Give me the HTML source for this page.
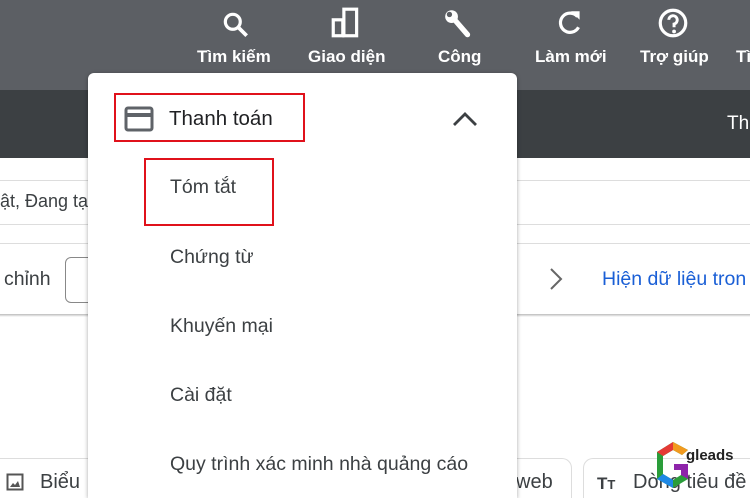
<!DOCTYPE html>
<html><head><meta charset="utf-8"><style>
*{margin:0;padding:0;box-sizing:border-box}
html,body{width:750px;height:498px;overflow:hidden}
body{position:relative;background:#fff;font-family:"Liberation Sans",Arial,sans-serif}
.a{position:absolute}
.top{left:0;top:0;width:750px;height:90px;background:#5c5f64}
.bar2{left:0;top:90px;width:750px;height:68px;background:#3c4043}
.tl{color:#fff;font-size:17px;font-weight:bold;top:47px;white-space:nowrap}
.menu{left:88px;top:73px;width:429px;height:425px;background:#fff;border-radius:6px 6px 0 0;box-shadow:0 1px 4px rgba(0,0,0,.35)}
.mi{color:#3c4043;font-size:19.5px;left:170px;white-space:nowrap}
.red{border:2px solid #e0111b}
</style></head><body>
<div class="a top"></div>
<div class="a bar2"></div>
<svg class="a" style="left:220px;top:9px" width="32" height="32" viewBox="0 0 30 30"><circle cx="12" cy="12" r="7" fill="none" stroke="#fff" stroke-width="3"/><line x1="17" y1="17" x2="25" y2="25" stroke="#fff" stroke-width="3.5"/></svg>
<svg class="a" style="left:329px;top:6px" width="34" height="34" viewBox="0 0 32 32"><rect x="14" y="3" width="12" height="25" fill="none" stroke="#fff" stroke-width="3"/><rect x="4" y="13" width="9" height="15" fill="none" stroke="#fff" stroke-width="3"/></svg>
<svg class="a" style="left:442px;top:7px" width="34" height="34" viewBox="0 0 32 32"><circle cx="9" cy="9" r="6" fill="#fff"/><circle cx="7" cy="7" r="2.5" fill="#5c5f64"/><line x1="11" y1="11" x2="24" y2="26" stroke="#fff" stroke-width="5" stroke-linecap="round"/></svg>
<svg class="a" style="left:554px;top:7px" width="32" height="32" viewBox="0 0 30 30"><path d="M22 9 A9 9 0 1 0 23 19" fill="none" stroke="#fff" stroke-width="3"/><path d="M16 4 L24 4 L24 12 Z" fill="#fff"/></svg>
<svg class="a" style="left:656px;top:6px" width="34" height="34" viewBox="0 0 32 32"><circle cx="16" cy="16" r="12" fill="none" stroke="#fff" stroke-width="3"/><path d="M12 13 a4 4 0 1 1 5 4 v3" fill="none" stroke="#fff" stroke-width="2.8"/><circle cx="17" cy="24" r="1.8" fill="#fff"/></svg>
<div class="a tl" style="left:197px">Tìm kiếm</div>
<div class="a tl" style="left:308px">Giao diện</div>
<div class="a tl" style="left:438px">Công</div>
<div class="a tl" style="left:535px">Làm mới</div>
<div class="a tl" style="left:640px">Trợ giúp</div>
<div class="a tl" style="left:736px">Tì</div>
<div class="a" style="left:727px;top:113px;color:#fff;font-size:19px">Th</div>
<div class="a" style="left:0;top:180px;width:750px;border-top:1px solid #ddd"></div>
<div class="a" style="left:0;top:224px;width:750px;border-top:1px solid #ddd"></div>
<div class="a" style="left:0;top:243px;width:750px;border-top:1px solid #ddd"></div>
<div class="a" style="left:0;top:314px;width:750px;height:3px;background:linear-gradient(#bbb,#fff)"></div>
<div class="a" style="left:0;top:191px;font-size:18px;color:#3c4043;white-space:nowrap">ật, Đang tạ</div>
<div class="a" style="left:4px;top:268px;font-size:19.5px;color:#3c4043">chỉnh</div>
<div class="a" style="left:65px;top:257px;width:40px;height:46px;border:1px solid #888;border-radius:6px"></div>
<svg class="a" style="left:548px;top:267px" width="16" height="24" viewBox="0 0 16 24"><path d="M3 2 L13 12 L3 22" fill="none" stroke="#666" stroke-width="2"/></svg>
<div class="a" style="left:602px;top:268px;font-size:19.5px;color:#1a5fd6;white-space:nowrap">Hiện dữ liệu tron</div>
<div class="a" style="left:-10px;top:458px;width:110px;height:40px;border:1px solid #ddd;border-bottom:none;border-radius:10px 10px 0 0"></div>
<svg class="a" style="left:6px;top:473px" width="18" height="18" viewBox="0 0 18 18"><rect x="1.5" y="1.5" width="15" height="15" fill="none" stroke="#555" stroke-width="2"/><path d="M4 14 L7 10 L9 12 L12 8 L14 14Z" fill="#555"/></svg>
<div class="a" style="left:40px;top:471px;font-size:20px;color:#3c4043">Biểu</div>
<div class="a" style="left:480px;top:458px;width:92px;height:40px;border:1px solid #ddd;border-bottom:none;border-radius:10px 10px 0 0"></div>
<div class="a" style="left:516px;top:471px;font-size:20px;color:#3c4043">web</div>
<div class="a" style="left:583px;top:458px;width:167px;height:40px;border:1px solid #ddd;border-bottom:none;border-right:none;border-radius:10px 0 0 0"></div>
<div class="a" style="left:597px;top:474px;font-size:17px;font-weight:bold;color:#3c4043">T<span style="font-size:13px">T</span></div>
<div class="a" style="left:633px;top:471px;font-size:20px;color:#3c4043;white-space:nowrap;width:117px;overflow:hidden">Dòng tiêu đề</div>
<svg class="a" style="left:655px;top:440px" width="40" height="52" viewBox="0 0 40 52"><path d="M18 2 L33 10 L27 15 L18 10 L8 16 L8 34 L18 40 L26 35 L26 30 L19 30 L19 24 L33 24 L33 39 L18 48 L2 39 L2 12 Z" fill="#2a9d3a"/><path d="M18 2 L33 10 L27 15 L18 10Z" fill="#f29a1f"/><path d="M2 12 L18 2 L18 10 L8 16Z" fill="#e53935"/><path d="M19 24 L33 24 L33 39 L26 35 L26 30 L19 30Z" fill="#8e24aa"/><path d="M2 39 L18 48 L18 40 L8 34Z" fill="#1e88e5"/></svg>
<div class="a" style="left:686px;top:447px;font-size:15px;font-weight:bold;color:#222">gleads</div>
<div class="a menu"></div>
<div class="a red" style="left:114px;top:93px;width:191px;height:49px"></div>
<svg class="a" style="left:124px;top:106px" width="30" height="26" viewBox="0 0 30 26"><rect x="2" y="2" width="26" height="22" rx="2" fill="none" stroke="#5f6368" stroke-width="3"/><rect x="2" y="7" width="26" height="4" fill="#5f6368"/></svg>
<div class="a" style="left:169px;top:107px;font-size:20.5px;color:#202124">Thanh toán</div>
<svg class="a" style="left:451px;top:110px" width="28" height="18" viewBox="0 0 28 18"><path d="M3 15 L14 4 L25 15" fill="none" stroke="#3c4043" stroke-width="2.8"/></svg>
<div class="a red" style="left:144px;top:158px;width:130px;height:68px"></div>
<div class="a mi" style="top:176px">Tóm tắt</div>
<div class="a mi" style="top:246px">Chứng từ</div>
<div class="a mi" style="top:315px">Khuyến mại</div>
<div class="a mi" style="top:384px">Cài đặt</div>
<div class="a mi" style="top:453px">Quy trình xác minh nhà quảng cáo</div>
</body></html>
